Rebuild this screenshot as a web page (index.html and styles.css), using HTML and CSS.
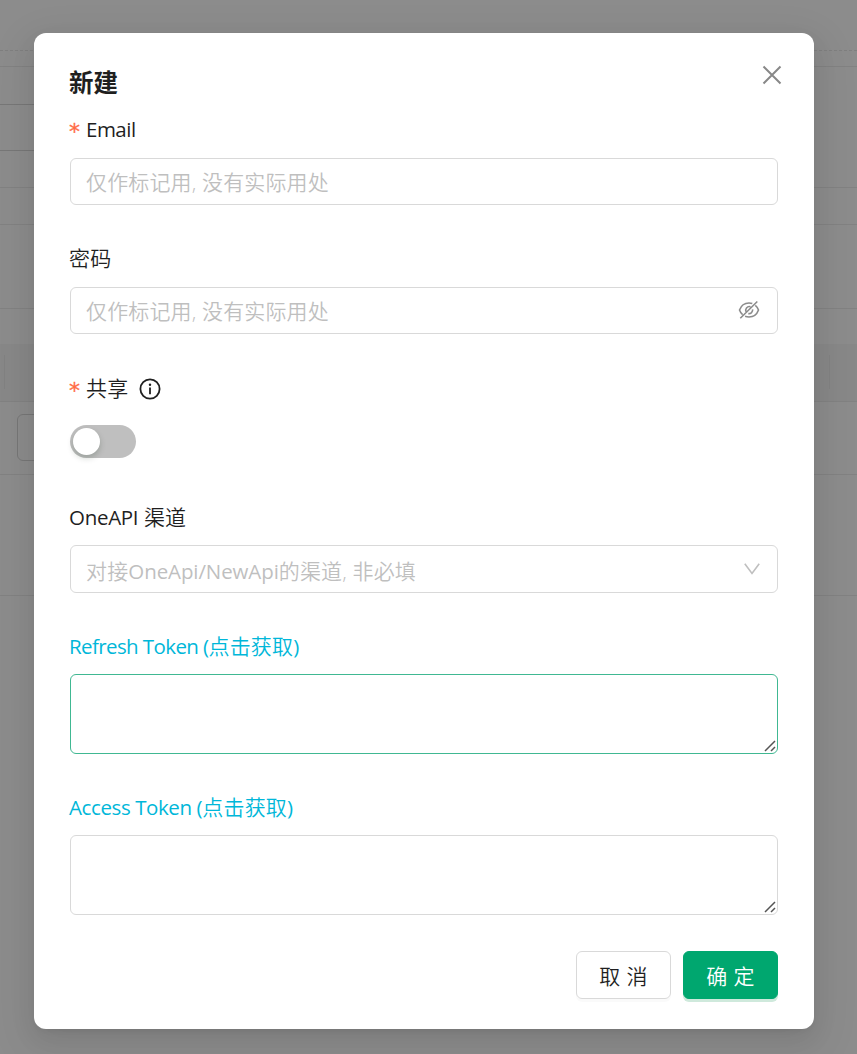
FILE: index.html
```
<!DOCTYPE html>
<html lang="zh-CN">
<head>
<meta charset="utf-8">
<title>新建</title>
<link rel="stylesheet" href="styles.css">
</head>
<body>
<div class="page">
  <div class="row row-tabs"></div>
  <div class="row row-gap"></div>
  <div class="row row-search"><div class="search-field"></div></div>
  <div class="row row-bar"></div>
  <div class="row row-tools"></div>
  <div class="row row-space"></div>
  <div class="row row-head"><i class="tick"></i><i class="tick"></i></div>
  <div class="row row-data"><div class="cell-button"></div></div>
  <div class="row row-foot"></div>
</div>
<div class="mask">
  <div class="modal">
    <header class="header">
      <h1 class="title">新建</h1>
      <svg class="close" viewBox="0 0 20 20"><path d="M1.5 1.5l17 17M18.500 1.500l-17 17"/></svg>
    </header>
    <div class="field">
      <div class="label"><span class="star">*</span><span class="latin email">Email</span></div>
      <div class="input"><span>仅作标记用, 没有实际用处</span></div>
    </div>
    <div class="field">
      <div class="label">密码</div>
      <div class="input"><span>仅作标记用, 没有实际用处</span>
        <svg class="eye" viewBox="0 0 22 20"><path d="M14.300 3.600Q12.700 3 11 3C6.500 3 3.200 5.300 1.500 10Q2.500 12.900 4.600 14.600M7.100 16.300Q8.900 17 11 17C15.500 17 18.800 14.700 20.500 10Q19.400 7 17.300 5.300M8.200 12.100A3.700 3.700 0 0 1 12.500 6.700M14.600 9.400A3.700 3.700 0 0 1 10.300 13.600M2.300 18.200L19.300 1.500"/></svg>
      </div>
    </div>
    <div class="field">
      <div class="label low"><span class="star">*</span>共享
        <svg class="info" viewBox="0 0 22 22"><circle cx="11" cy="11" r="9.600"/><path d="M11 9.500v6.700"/><circle class="dot" cx="11" cy="6.700" r="1.200"/></svg>
      </div>
      <div class="control"><div class="switch"><div class="knob"></div></div></div>
    </div>
    <div class="field">
      <div class="label low"><span class="latin oneapi">OneAPI</span>&nbsp;渠道</div>
      <div class="input select"><span>对接<span class="latin placeholder-latin">OneApi/NewApi</span>的渠道, 非必填</span>
        <svg class="arrow" viewBox="0 0 16 12"><path d="M.8.800L8 10.500 15.200.800"/></svg>
      </div>
    </div>
    <div class="field">
      <div class="label low link"><span class="latin refresh">Refresh Token (</span>点击获取<span class="latin">)</span></div>
      <div class="area active"><svg class="grip" viewBox="0 0 12 12"><path d="M1 11L11 1M7 11l4-4"/></svg></div>
    </div>
    <div class="field">
      <div class="label low link"><span class="latin access">Access Token (</span>点击获取<span class="latin">)</span></div>
      <div class="area"><svg class="grip" viewBox="0 0 12 12"><path d="M1 11L11 1M7 11l4-4"/></svg></div>
    </div>
    <footer class="footer">
      <div class="btn">取 消</div>
      <div class="btn primary">确 定</div>
    </footer>
  </div>
</div>
</body>
</html>
```
FILE: styles.css
```
* { box-sizing: border-box; }
body {
  margin: 0;
  height: 1054px;
  overflow: hidden;
  position: relative;
  background: #8c8c8c;
  color: #1f1f1f;
  font-family: "Open Sans", "Noto Sans CJK SC", sans-serif;
  font-size: 21px;
}
.row { border-bottom: 1px solid #828282; }
.row-tabs { height: 51px; border-bottom: 1px dashed #7f7f7f; }
.row-gap { height: 16px; }
.row-search { height: 121px; padding-top: 37px; }
.search-field { width: 60px; height: 47px; border: solid #777; border-width: 1px 0; }
.row-bar { height: 37px; }
.row-tools { height: 84px; }
.row-space { height: 35px; border: 0; }
.row-head {
  height: 58px;
  padding: 11px 27px 12px 4px;
  display: flex;
  justify-content: space-between;
  background: #888;
}
.tick { width: 1px; background: #828282; }
.row-data { height: 73px; padding: 12px 17px; }
.cell-button { width: 60px; height: 47px; border: 1px solid #777; border-radius: 6px; }
.row-foot { height: 121px; }

.mask { position: absolute; inset: 0; padding: 33px 43px 25px 34px; }
.modal {
  height: 996px;
  padding: 30px 36px;
  background: #fff;
  border-radius: 12px;
  box-shadow: 0 9px 24px rgba(0,0,0,.08), 0 4px 9px -6px rgba(0,0,0,.12), 0 13px 42px 12px rgba(0,0,0,.05);
}
.header { height: 50px; display: flex; justify-content: space-between; }
.title { margin: 0 0 0 -1px; font-size: 24.500px; line-height: 39px; font-weight: 700; }
.close { width: 20px; height: 20px; margin: 2px -4px 0 0; fill: none; stroke: #888; stroke-width: 2; }

.field { min-height: 93px; margin-bottom: 36px; }
.label { height: 33px; margin: 0 0 12px -1px; display: flex; align-items: center; line-height: 33px; font-weight: 350; letter-spacing: .2px; white-space: nowrap; }
.low { padding-top: 2px; }
.latin { font-family: "Open Sans", sans-serif; font-size: 20.500px; font-weight: 400; letter-spacing: -.3px; }
.email { letter-spacing: -.5px; }
.refresh { letter-spacing: -.6px; }
.access { letter-spacing: -.4px; }
.star { width: 17px; padding-top: 4px; color: #ff6b45; font-family: "DejaVu Sans", sans-serif; font-size: 22px; font-weight: 400; -webkit-text-stroke: .3px #ff6b45; }
.link { color: #00b7d9; }
.info { width: 22px; height: 22px; margin-left: 11px; fill: none; stroke: #1f1f1f; stroke-width: 1.800; }
.info .dot { fill: #1f1f1f; stroke: none; }

.input {
  height: 47px;
  padding: 0 17px 2px 15px;
  display: flex;
  align-items: center;
  justify-content: space-between;
  border: 1px solid #d9d9d9;
  border-radius: 6px;
  color: #bfbfbf;
  font-weight: 350;
  letter-spacing: .15px;
  white-space: nowrap;
}
.select { height: 48px; padding-top: 1px; padding-bottom: 0; }
.placeholder-latin { letter-spacing: -.1px; }
.eye { width: 22px; height: 20px; margin-top: 1px; fill: none; stroke: #8c8c8c; stroke-width: 1.600; }
.arrow { width: 16px; height: 12px; margin: -2px 0 0 0; fill: none; stroke: #bfbfbf; stroke-width: 1.600; }

.control { padding-top: 9px; }
.switch { width: 66px; height: 33px; padding: 3px; border-radius: 17px; background: #bfbfbf; }
.knob { width: 27px; height: 27px; border-radius: 50%; background: #fff; box-shadow: 0 3px 6px rgba(0,35,11,.2); }

.area {
  height: 80px;
  padding: 0 1px 0 0;
  display: flex;
  align-items: flex-end;
  justify-content: flex-end;
  border: 1px solid #d9d9d9;
  border-radius: 6px;
}
.active { border-color: #40b892; }
.grip { width: 12px; height: 12px; margin-bottom: 1px; fill: none; stroke: #555; stroke-width: 1.500; }

.footer { display: flex; justify-content: flex-end; gap: 12px; }
.btn {
  width: 95px;
  height: 48px;
  padding-top: 1px;
  border: 1px solid #d9d9d9;
  border-radius: 6px;
  line-height: 46px;
  text-align: center;
  font-weight: 350;
  letter-spacing: .4px;
  box-shadow: 0 3px 0 rgba(0,0,0,.02);
}
.primary { background: #00a76f; border-color: #00a76f; color: #fff; box-shadow: 0 3px 0 #cfe9dc; }
```
